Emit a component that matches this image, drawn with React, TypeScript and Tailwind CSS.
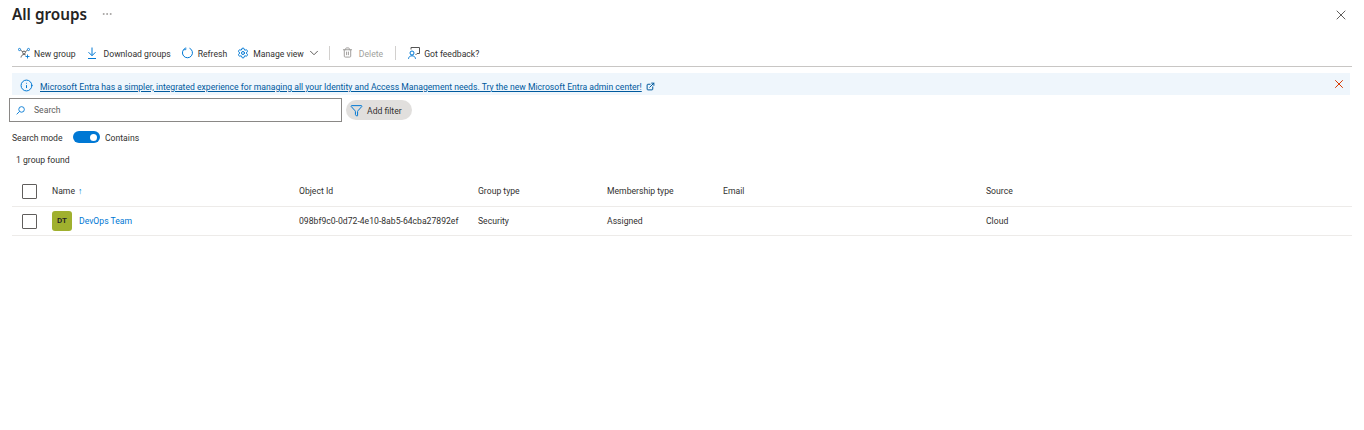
import { ChevronDown, X, Info, ExternalLink, Filter, Settings, Trash2, MoreHorizontal } from "lucide-react";

const font = { fontFamily: 'Roboto, sans-serif' };

const NewGroupIcon = () => (
  <svg width="12" height="12" viewBox="0 0 12 12" fill="none" stroke="#0078d4" strokeWidth="0.9">
    <circle cx="1.500" cy="2.500" r="1.100" />
    <circle cx="6" cy="5.500" r="1.400" stroke="#555" />
    <circle cx="10.500" cy="2.500" r="1.100" />
    <path d="M2.500 3.200l2.300 1.500M9.500 3.200L7.300 4.700M3 10.500c.3-2 1.400-3 3-3 .7 0 1.300.2 1.800.6" stroke="#555" />
    <path d="M9.500 7.500v4M7.500 9.500h4" />
  </svg>
);

const DownloadIcon = () => (
  <svg width="10" height="12" viewBox="0 0 10 12" fill="none" stroke="#0078d4" strokeWidth="1">
    <path d="M5 0.500v8M1.500 5.200L5 8.700l3.500-3.500M1 11.500h8" />
  </svg>
);

const RefreshIcon = () => (
  <svg width="11" height="12" viewBox="0 0 11 12" fill="none" stroke="#0078d4" strokeWidth="1">
    <path d="M7.500 1.200a5 5 0 1 1-4.300 0.100" />
    <path d="M3.800 0.500v2.200h-2.200" strokeWidth="0.800" />
  </svg>
);

const SearchIcon = () => (
  <svg width="9" height="9" viewBox="0 0 11 11" fill="none" stroke="#0078d4" strokeWidth="1.100">
    <circle cx="6.800" cy="4.200" r="3.400" />
    <path d="M4.300 6.700L0.800 10.200" />
  </svg>
);

const FeedbackIcon = () => (
  <svg width="12" height="12" viewBox="0 0 12 12" fill="none" stroke="#0078d4" strokeWidth="1">
    <circle cx="4" cy="6" r="2" />
    <path d="M0.500 11.800c.3-2 1.500-3 3.500-3s3.200 1 3.500 3" />
    <path d="M3 2.500V.5h8.500v6H9L7.500 8" stroke="#555" />
  </svg>
);

const ToolbarButton = ({ icon, label, muted, gap }: { icon: React.ReactNode; label: string; muted?: boolean; gap: string }) => (
  <div className={`flex items-center ${gap} ${muted ? "text-[#a19f9d]" : "text-[#323130]"}`}>
    {icon}
    <span className="pt-[2px]">{label}</span>
  </div>
);

const Separator = () => <div className="w-px h-[14px] bg-[#d2d0ce]" />;

const Checkbox = () => <div className="h-[15px] w-[15px] border border-[#605e5c] rounded-[1px] bg-white" />;

const Row = ({ cells, className }: { cells: React.ReactNode[]; className: string }) => (
  <div className={`flex items-center border-b border-[#edebe9] ${className}`}>
    <div className="w-[40px] pl-[10px]"><Checkbox /></div>
    <div className="w-[247px]">{cells[0]}</div>
    <div className="w-[179px] pt-[1px]">{cells[1]}</div>
    <div className="w-[129px] pt-[1px]">{cells[2]}</div>
    <div className="w-[116px] pt-[1px]">{cells[3]}</div>
    <div className="w-[263px] pt-[1px]">{cells[4]}</div>
    <div className="pt-[1px]">{cells[5]}</div>
  </div>
);

export default function App() {
  return (
    <div style={font} className="h-[430px] w-[1364px] bg-white text-[8.65px] text-[#323130] overflow-hidden">
      {/* Title */}
      <div className="flex items-center justify-between pl-[12px] pr-[15px] h-[29px]">
        <div className="flex items-center gap-[14px]">
          <h1 style={{ fontFamily: '"Noto Sans", sans-serif' }} className="text-[15.3px] font-semibold text-[#252423] leading-none">All groups</h1>
          <MoreHorizontal size={12} absoluteStrokeWidth strokeWidth={1} className="text-[#a19f9d]" />
        </div>
        <X size={16} absoluteStrokeWidth strokeWidth={1} className="text-[#605e5c]" />
      </div>

      {/* Toolbar */}
      <div className="mx-[12px] mt-[12px] h-[24px] flex items-center pl-[6px] pb-[1px] border-b border-[#c8c6c4] box-content">
        <div className="flex items-center">
          <ToolbarButton gap="gap-[4px]" icon={<NewGroupIcon />} label="New group" />
          <div className="ml-[11px]"><ToolbarButton gap="gap-[7px]" icon={<DownloadIcon />} label="Download groups" /></div>
          <div className="ml-[11px]"><ToolbarButton gap="gap-[5px]" icon={<RefreshIcon />} label="Refresh" /></div>
          <div className="ml-[10px] flex items-center gap-[4px]">
            <Settings size={12} absoluteStrokeWidth strokeWidth={1} className="text-[#0078d4]" />
            <span className="pt-[2px]">Manage view</span>
            <ChevronDown size={14} absoluteStrokeWidth strokeWidth={1} className="text-[#605e5c] -ml-[1px]" />
          </div>
          <div className="ml-[8px]"><Separator /></div>
          <div className="ml-[12px]">
            <ToolbarButton muted gap="gap-[6px]" icon={<Trash2 size={11} absoluteStrokeWidth strokeWidth={1} />} label="Delete" />
          </div>
          <div className="ml-[12px]"><Separator /></div>
          <div className="ml-[12px]"><ToolbarButton gap="gap-[4px]" icon={<FeedbackIcon />} label="Got feedback?" /></div>
        </div>
      </div>

      {/* Banner */}
      <div className="ml-[12px] mr-[14px] mt-[6px] h-[22px] bg-[#eff6fc] flex items-center justify-between pl-[8px] pr-[4px]">
        <div className="flex items-center gap-[7px]">
          <Info size={13} absoluteStrokeWidth strokeWidth={1} className="text-[#0078d4] mt-[4px]" />
          <span className="text-[#005a9e] underline pt-[6px]">
            Microsoft Entra has a simpler, integrated experience for managing all your Identity and Access Management needs. Try the new Microsoft Entra admin center!
          </span>
          <ExternalLink size={9} absoluteStrokeWidth strokeWidth={1} className="text-[#005a9e] -ml-[3px] mt-[6px]" />
        </div>
        <X size={14} absoluteStrokeWidth strokeWidth={1} className="text-[#d83b01]" />
      </div>

      {/* Search */}
      <div className="flex items-center ml-[9px] mt-[3px] gap-[4px]">
        <div className="w-[333px] h-[24px] border border-[#8a8886] flex items-center pl-[6px] gap-[9px] text-[#605e5c]">
          <SearchIcon />
          <span className="pt-[1px]">Search</span>
        </div>
        <div className="h-[20px] w-[66px] rounded-full bg-[#e1dfdd] flex items-center pl-[4px] gap-[4px]">
          <Filter size={13} absoluteStrokeWidth strokeWidth={1} className="text-[#0078d4]" />
          <span className="pt-[2px]">Add filter</span>
        </div>
      </div>

      {/* Search mode */}
      <div className="flex items-center ml-[12px] mt-[9px] h-[14px]">
        <span className="w-[61px]">Search mode</span>
        <div className="w-[27px] h-[12px] mb-[2px] rounded-full bg-[#0078d4] flex items-center justify-end pr-[3px]">
          <div className="w-[7px] h-[7px] rounded-full bg-white" />
        </div>
        <span className="ml-[5px]">Contains</span>
      </div>

      <div className="ml-[16px] mt-[8px] h-[14px] leading-[14px]">1 group found</div>

      {/* Table */}
      <div className="ml-[12px] mr-[12px] mt-[9px]">
        <Row
          className="h-[31px]"
          cells={[
            <span className="flex items-center gap-[3px] pt-[1px]">Name <span className="text-[#0078d4]">↑</span></span>,
            "Object Id",
            "Group type",
            "Membership type",
            "Email",
            "Source",
          ]}
        />
        <Row
          className="h-[29px]"
          cells={[
            <div className="flex items-center gap-[7px]">
              <div className="w-[20px] h-[20px] rounded-[3px] bg-[#a0b02e] flex items-center justify-center text-[8px] font-semibold text-[#252423]">DT</div>
              <span className="text-[#0078d4] pt-[1px]">DevOps Team</span>
            </div>,
            "098bf9c0-0d72-4e10-8ab5-64cba27892ef",
            "Security",
            "Assigned",
            "",
            "Cloud",
          ]}
        />
      </div>
    </div>
  );
}
